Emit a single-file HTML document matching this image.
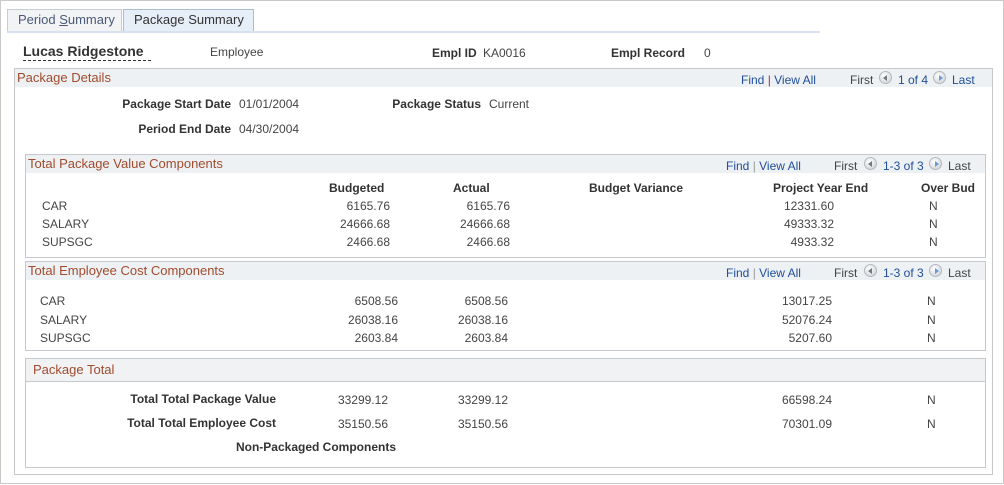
<!DOCTYPE html>
<html><head><meta charset="utf-8"><style>
body{margin:0;width:1004px;height:485px;position:relative;background:#fff;font-family:"Liberation Sans",Arial,sans-serif;font-size:12px;color:#333;overflow:hidden}
div,span{position:absolute}
.t{line-height:14px;white-space:nowrap}
.b{font-weight:bold;color:#333}
.v{color:#444}
.r{text-align:right;width:200px}
.h{color:#a14b2d;font-size:13px}
.l{color:#1f4e9a}
.ic{width:13px;height:13px;border-radius:50%;background:radial-gradient(circle at 40% 35%,#fff,#c8ccd2);border:1px solid #b4b8be;box-sizing:border-box}
.ic i{position:absolute;top:3px;width:0;height:0;border-top:3px solid transparent;border-bottom:3px solid transparent}
.lf i{left:3px;border-right:4px solid #777}
.rt i{left:5px;border-left:4px solid #6a9ad6}
</style></head><body>
<div style="left:0;top:0;width:1002px;height:482px;border:1px solid #c9c9c9"></div>
<div style="left:7px;top:9px;width:113px;height:22px;border:1px solid #c6cdd5;border-bottom:none;background:#f2f3f4"></div>
<div class="t" style="left:18px;top:13px;color:#4a5a7a;font-size:13px">Period <u>S</u>ummary</div>
<div style="left:123px;top:9px;width:129px;height:22px;border:1px solid #a9bcd3;border-bottom:none;background:#e6eef8"></div>
<div class="t" style="left:134px;top:13px;color:#333;font-size:13px">Package Summary</div>
<div style="left:7px;top:31px;width:813px;height:2px;background:#d6e2ef"></div>

<div class="t" style="left:23px;top:44px;font-size:14px;font-weight:bold;color:#333">Lucas Ridgestone</div>
<div style="left:23px;top:60px;width:128px;border-top:1px dashed #333"></div>
<div class="t v" style="left:210px;top:45px">Employee</div>
<div class="t b" style="left:432px;top:46px">Empl ID</div>
<div class="t v" style="left:483px;top:46px">KA0016</div>
<div class="t b" style="left:611px;top:46px">Empl Record</div>
<div class="t v" style="left:704px;top:46px">0</div>

<div style="left:14px;top:68px;width:979px;height:407px;border:1px solid #c5c9ce;box-sizing:border-box"></div>
<div style="left:15px;top:69px;width:977px;height:18px;background:#eef1f3"></div>
<div class="t h" style="left:17px;top:71px">Package Details</div>
<div class="t l" style="left:741px;top:73px">Find <span style="position:static;color:#a03050">|</span> View All</div>
<div class="t v" style="left:850px;top:73px">First</div>
<div class="ic lf" style="left:879px;top:71px"><i></i></div>
<div class="t l" style="left:898px;top:73px">1 of 4</div>
<div class="ic rt" style="left:933px;top:71px"><i></i></div>
<div class="t l" style="left:952px;top:73px">Last</div>

<div class="t b r" style="left:31px;top:97px">Package Start Date</div>
<div class="t v" style="left:239px;top:97px">01/01/2004</div>
<div class="t b r" style="left:281px;top:97px">Package Status</div>
<div class="t v" style="left:489px;top:97px">Current</div>
<div class="t b r" style="left:31px;top:122px">Period End Date</div>
<div class="t v" style="left:239px;top:122px">04/30/2004</div>

<!-- box1 -->
<div style="left:25px;top:154px;width:961px;height:104px;border:1px solid #c5c9ce;box-sizing:border-box"></div>
<div style="left:26px;top:155px;width:959px;height:18px;background:#eef1f3"></div>
<div class="t h" style="left:28px;top:157px">Total Package Value Components</div>
<div class="t l" style="left:726px;top:159px">Find <span style="position:static;color:#999">|</span> View All</div>
<div class="t v" style="left:834px;top:159px">First</div>
<div class="ic lf" style="left:864px;top:157px"><i></i></div>
<div class="t l" style="left:883px;top:159px">1-3 of 3</div>
<div class="ic rt" style="left:929px;top:157px"><i></i></div>
<div class="t v" style="left:948px;top:159px">Last</div>
<div class="t b" style="left:329px;top:181px">Budgeted</div>
<div class="t b" style="left:453px;top:181px">Actual</div>
<div class="t b" style="left:589px;top:181px">Budget Variance</div>
<div class="t b" style="left:773px;top:181px">Project Year End</div>
<div class="t b" style="left:921px;top:181px">Over Bud</div>
<div class="t v" style="left:42px;top:199px">CAR</div>
<div class="t v" style="left:42px;top:217px">SALARY</div>
<div class="t v" style="left:42px;top:235px">SUPSGC</div>
<div class="t v r" style="left:190px;top:199px">6165.76</div>
<div class="t v r" style="left:190px;top:217px">24666.68</div>
<div class="t v r" style="left:190px;top:235px">2466.68</div>
<div class="t v r" style="left:310px;top:199px">6165.76</div>
<div class="t v r" style="left:310px;top:217px">24666.68</div>
<div class="t v r" style="left:310px;top:235px">2466.68</div>
<div class="t v r" style="left:634px;top:199px">12331.60</div>
<div class="t v r" style="left:634px;top:217px">49333.32</div>
<div class="t v r" style="left:634px;top:235px">4933.32</div>
<div class="t v" style="left:929px;top:199px">N</div>
<div class="t v" style="left:929px;top:217px">N</div>
<div class="t v" style="left:929px;top:235px">N</div>

<!-- box2 -->
<div style="left:25px;top:261px;width:961px;height:90px;border:1px solid #c5c9ce;box-sizing:border-box"></div>
<div style="left:26px;top:262px;width:959px;height:18px;background:#eef1f3"></div>
<div class="t h" style="left:28px;top:264px">Total Employee Cost Components</div>
<div class="t l" style="left:726px;top:266px">Find <span style="position:static;color:#999">|</span> View All</div>
<div class="t v" style="left:834px;top:266px">First</div>
<div class="ic lf" style="left:864px;top:264px"><i></i></div>
<div class="t l" style="left:883px;top:266px">1-3 of 3</div>
<div class="ic rt" style="left:929px;top:264px"><i></i></div>
<div class="t v" style="left:948px;top:266px">Last</div>
<div class="t v" style="left:40px;top:294px">CAR</div>
<div class="t v" style="left:40px;top:313px">SALARY</div>
<div class="t v" style="left:40px;top:331px">SUPSGC</div>
<div class="t v r" style="left:198px;top:294px">6508.56</div>
<div class="t v r" style="left:198px;top:313px">26038.16</div>
<div class="t v r" style="left:198px;top:331px">2603.84</div>
<div class="t v r" style="left:308px;top:294px">6508.56</div>
<div class="t v r" style="left:308px;top:313px">26038.16</div>
<div class="t v r" style="left:308px;top:331px">2603.84</div>
<div class="t v r" style="left:632px;top:294px">13017.25</div>
<div class="t v r" style="left:632px;top:313px">52076.24</div>
<div class="t v r" style="left:632px;top:331px">5207.60</div>
<div class="t v" style="left:927px;top:294px">N</div>
<div class="t v" style="left:927px;top:313px">N</div>
<div class="t v" style="left:927px;top:331px">N</div>

<!-- box3 -->
<div style="left:25px;top:358px;width:961px;height:110px;border:1px solid #c5c9ce;box-sizing:border-box"></div>
<div style="left:26px;top:359px;width:959px;height:22px;background:#f0f2f4;border-bottom:1px solid #c5c9ce"></div>
<div class="t h" style="left:33px;top:363px">Package Total</div>
<div class="t b r" style="left:76px;top:392px">Total Total Package Value</div>
<div class="t b r" style="left:76px;top:416px">Total Total Employee Cost</div>
<div class="t b r" style="left:196px;top:440px">Non-Packaged Components</div>
<div class="t v r" style="left:188px;top:393px">33299.12</div>
<div class="t v r" style="left:188px;top:417px">35150.56</div>
<div class="t v r" style="left:308px;top:393px">33299.12</div>
<div class="t v r" style="left:308px;top:417px">35150.56</div>
<div class="t v r" style="left:632px;top:393px">66598.24</div>
<div class="t v r" style="left:632px;top:417px">70301.09</div>
<div class="t v" style="left:927px;top:393px">N</div>
<div class="t v" style="left:927px;top:417px">N</div>
</body></html>
